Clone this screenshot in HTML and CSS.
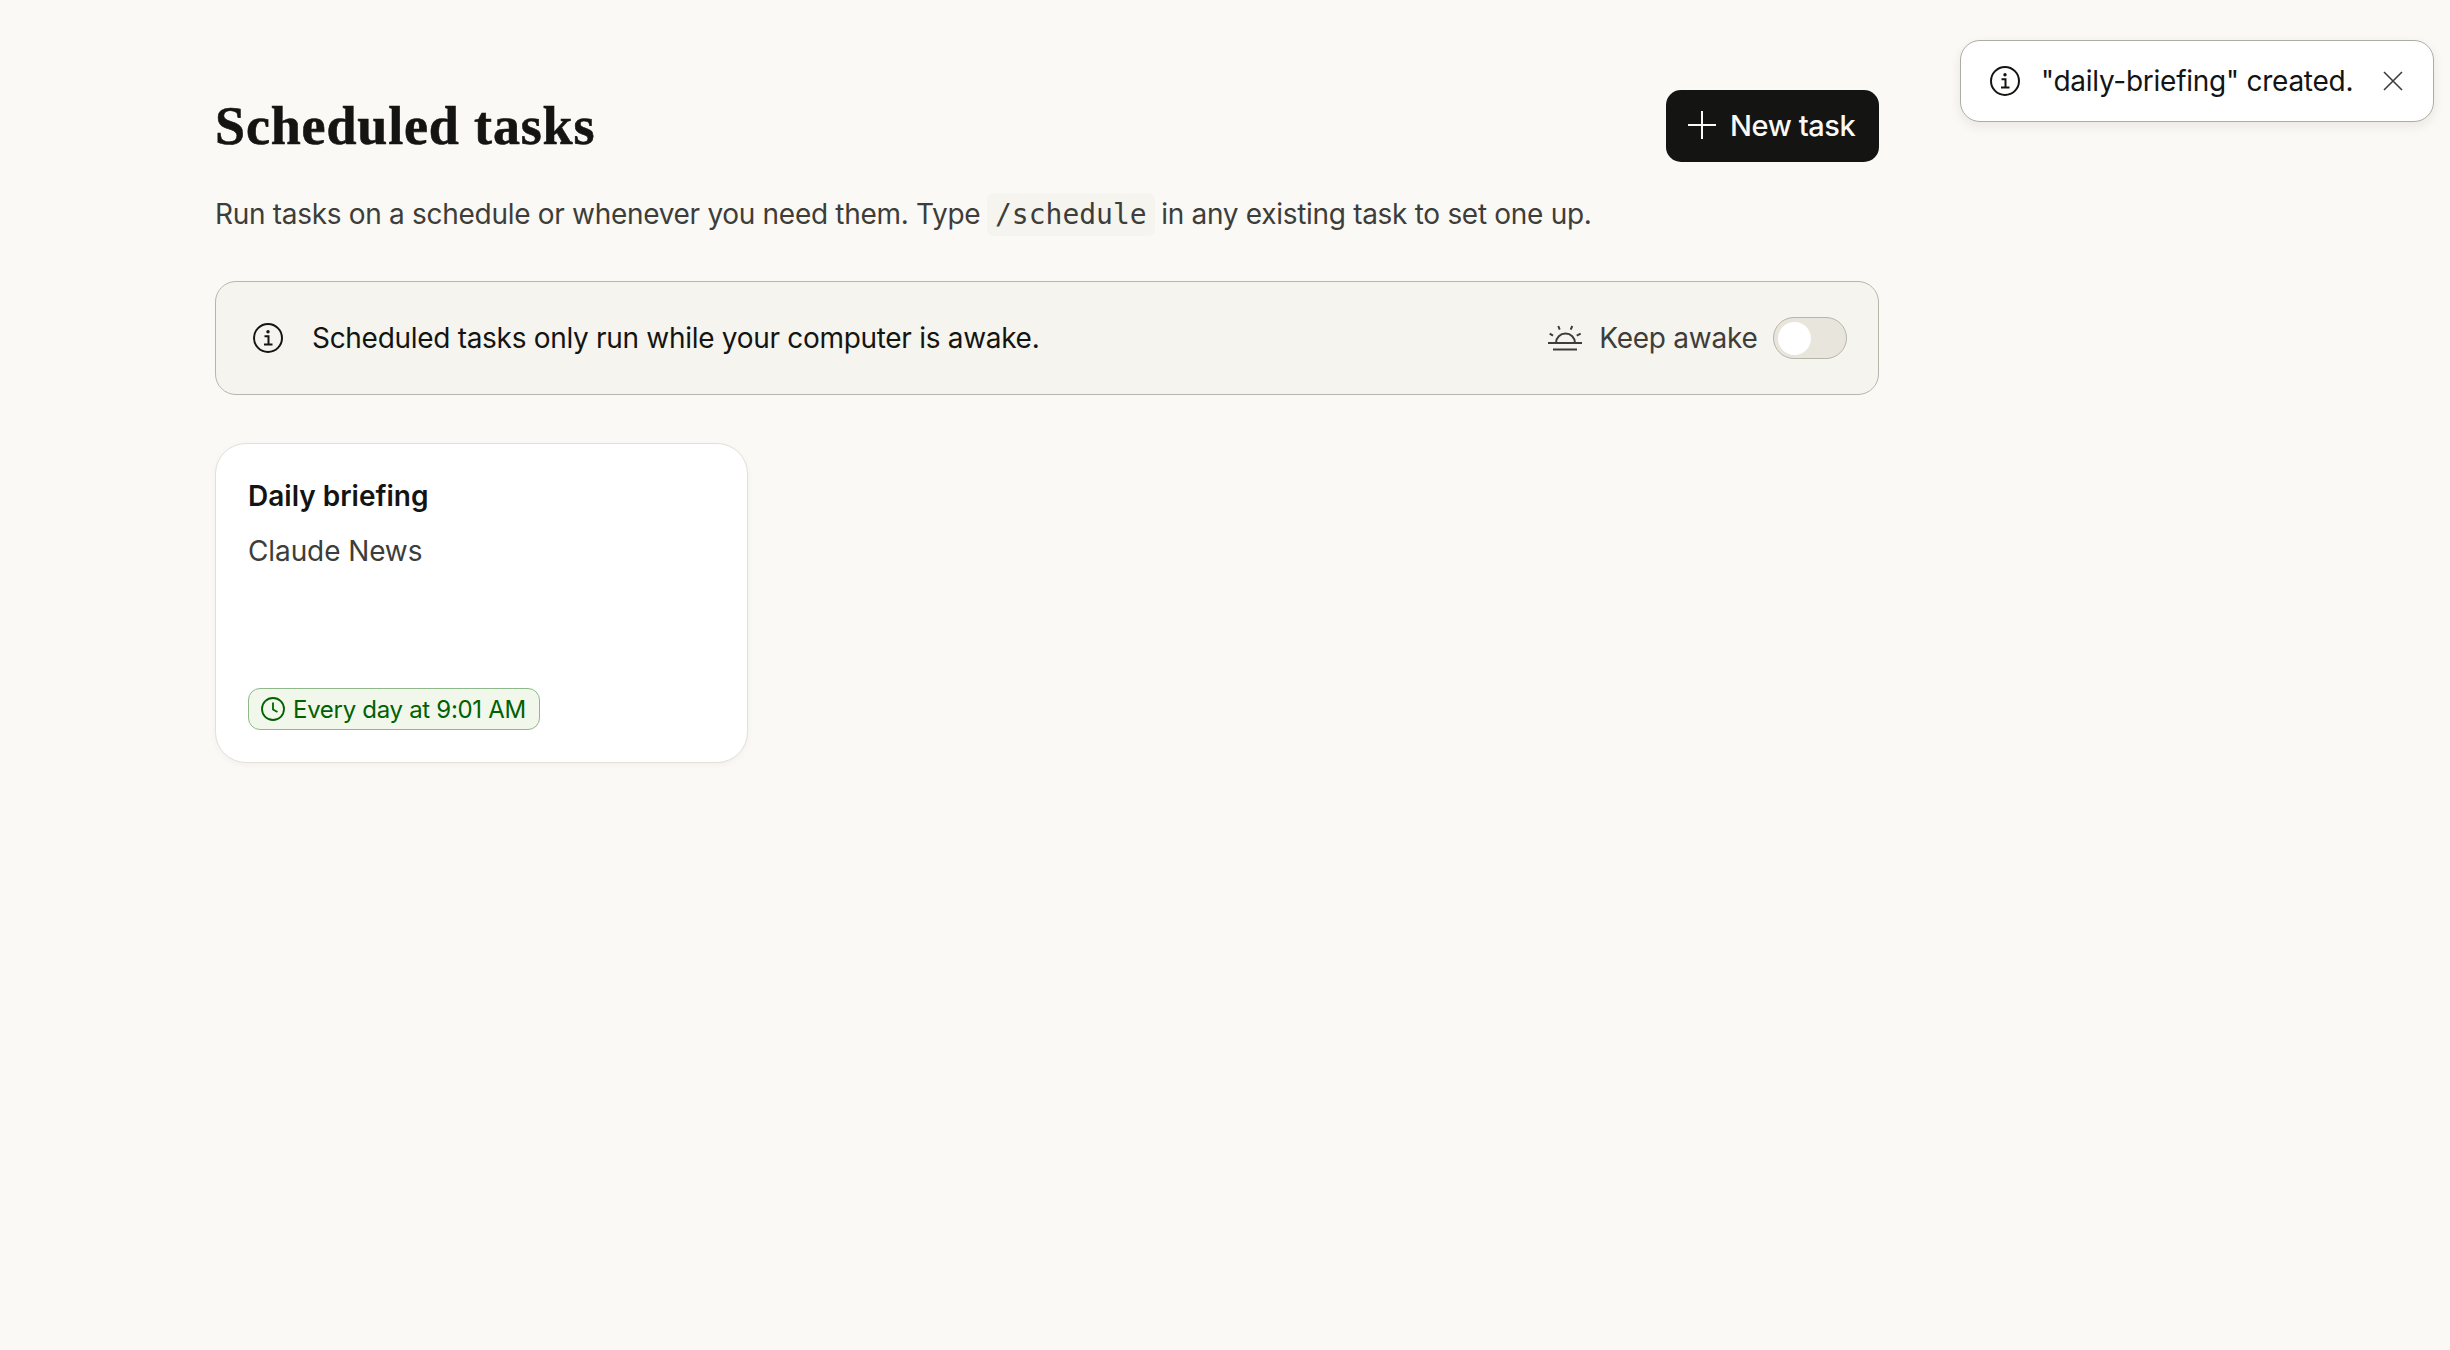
FILE: index.html
```html
<!DOCTYPE html>
<html lang="en">
<head>
<meta charset="utf-8">
<title>Scheduled tasks</title>
<link rel="stylesheet" href="styles.css">
</head>
<body>
<main class="page">
  <header class="header">
    <h1 class="title">Scheduled tasks</h1>
    <button class="new-btn">
      <svg class="plus" viewBox="0 0 30 30" fill="none" stroke="currentColor" stroke-width="2"><path d="M15 1v28M1 15h28"/></svg>
      <span>New task</span>
    </button>
  </header>
  <p class="subtitle">Run tasks on a schedule or whenever you need them. Type <code class="code">/schedule</code> in any existing task to set one up.</p>
  <section class="banner">
    <svg class="info" viewBox="0 0 30 30" fill="none" stroke="currentColor"><circle cx="15" cy="15" r="14" stroke-width="2"/><path d="M11.5 13.2h4v8M11 21.5h8.5" stroke-width="2"/><circle cx="15" cy="8.8" r="1.7" fill="currentColor" stroke="none"/></svg>
    <span class="banner-text">Scheduled tasks only run while your computer is awake.</span>
    <div class="awake">
      <svg class="sun" viewBox="0 0 34 26" fill="none" stroke="currentColor" stroke-width="2"><path d="M8 18a9.500 9.500 0 0 1 19 0M0 18h34M5 24.500h24"/><path d="M10.300 1l1.400 3.700M24.300 1l-1.600 3.700M1.700 8.700l3.300 2M32.700 8.700l-4 2"/></svg>
      <span class="awake-label">Keep awake</span>
      <span class="toggle"><span class="knob"></span></span>
    </div>
  </section>
  <section class="cards">
    <article class="card">
      <h2 class="card-title">Daily briefing</h2>
      <p class="card-sub">Claude News</p>
      <span class="badge">
        <svg class="clock" viewBox="0 0 24 24" fill="none" stroke="currentColor" stroke-width="1.8"><circle cx="12" cy="12" r="11"/><path d="M12 5.500V12.500l4.500 2.500"/></svg>
        <span>Every day at 9:01 AM</span>
      </span>
    </article>
  </section>
</main>
<aside class="toast">
  <svg class="info" viewBox="0 0 30 30" fill="none" stroke="currentColor"><circle cx="15" cy="15" r="14" stroke-width="2"/><path d="M11.5 13.2h4v8M11 21.5h8.500" stroke-width="2"/><circle cx="15" cy="8.800" r="1.700" fill="currentColor" stroke="none"/></svg>
  <span class="toast-text">"daily-briefing" created.</span>
  <svg class="close" viewBox="0 0 20 20" fill="none" stroke="currentColor" stroke-width="1.600"><path d="M1 1l18 18M19 1L1 19"/></svg>
</aside>
</body>
</html>
```

FILE: styles.css
```css
* { box-sizing: border-box; }
html, body { margin: 0; height: 100%; }
body {
  background: #faf9f5;
  color: #141413;
  font-family: "Inter", "Liberation Sans", sans-serif;
}
.page { width: 1664px; margin-left: 215px; padding-top: 90px; }
.header { display: flex; align-items: center; justify-content: space-between; height: 72px; }
.title {
  margin: 0;
  font-family: "Liberation Serif", serif;
  font-weight: 700;
  font-size: 54px;
  line-height: 72px;
  letter-spacing: 0.85px;
  color: #141413;
  -webkit-text-stroke: 0.6px #141413;
}
.new-btn {
  display: flex;
  align-items: center;
  gap: 13px;
  width: 213px;
  height: 72px;
  padding: 0 0 2px 21px;
  border: 0;
  border-radius: 15px;
  background: #141413;
  color: #faf9f5;
  font: 500 29px "Inter", sans-serif;
  letter-spacing: -0.4px;
}
.plus { width: 30px; height: 30px; }
.subtitle {
  margin: 30px 0 0;
  height: 44px;
  font-size: 28px;
  line-height: 44px;
  letter-spacing: -0.3px;
  color: #3d3d3a;
}
.code {
  display: inline-block;
  padding: 0 8px;
  margin: 0 -1px;
  height: 43px;
  border-radius: 7px;
  background: #f5f4ee;
  font-family: "DejaVu Sans Mono", monospace;
  font-size: 28px;
  line-height: 43px;
  letter-spacing: 0;
}
.banner {
  display: flex;
  align-items: center;
  margin-top: 45px;
  height: 114px;
  padding: 0 31.5px 0 37px;
  border: 1.5px solid #b8b6ab;
  border-radius: 21px;
  background: #f5f4ee;
}
.info { width: 30px; height: 30px; flex: none; }
.banner-text { margin-left: 29px; font-size: 28px; letter-spacing: -0.3px; color: #141413; }
.awake { display: flex; align-items: center; margin-left: auto; color: #3d3d3a; }
.sun { width: 34px; height: 26px; }
.awake-label { margin-left: 17px; font-size: 28px; letter-spacing: -0.25px; }
.toggle {
  display: flex;
  align-items: center;
  width: 74px;
  height: 42px;
  margin-left: 15px;
  padding-left: 4px;
  border: 1.5px solid #b8b6ab;
  border-radius: 21px;
  background: #e8e6dc;
}
.knob { width: 33px; height: 33px; border-radius: 50%; background: #fff; }
.cards { display: grid; grid-template-columns: repeat(3, 1fr); gap: 32px; margin-top: 48px; }
.card {
  display: flex;
  flex-direction: column;
  align-items: flex-start;
  height: 320px;
  padding: 32px 32px 32px;
  border: 1.5px solid #e2e0d7;
  border-radius: 31px;
  background: #fff;
  box-shadow: 0 2px 6px rgba(20,20,19,.04);
}
.card-title { margin: 0; font-size: 28px; line-height: 40px; font-weight: 600; color: #141413; }
.card-sub { margin: 15px 0 0; font-size: 28px; line-height: 40px; letter-spacing: -0.1px; color: #3d3d3a; }
.badge {
  display: flex;
  align-items: center;
  gap: 8px;
  margin-top: auto;
  height: 42px;
  padding: 0 13px 0 12px;
  border: 1.5px solid #8fb98a;
  border-radius: 12px;
  background: #f2f7ec;
  color: #006100;
  font-size: 24px;
  letter-spacing: -0.3px;
}
.clock { width: 24px; height: 24px; }
.toast {
  position: absolute;
  left: 1960px;
  top: 40px;
  display: flex;
  align-items: center;
  width: 474px;
  height: 82px;
  padding: 0 30px 0 29px;
  border: 1.5px solid #aeaca3;
  border-radius: 20px;
  background: #fff;
  box-shadow: 0 4px 12px rgba(20,20,19,.08);
}
.toast-text { margin-left: 21px; font-size: 28px; letter-spacing: -0.25px; color: #141413; }
.close { width: 20px; height: 20px; margin-left: auto; color: #3d3d3a; }
```
